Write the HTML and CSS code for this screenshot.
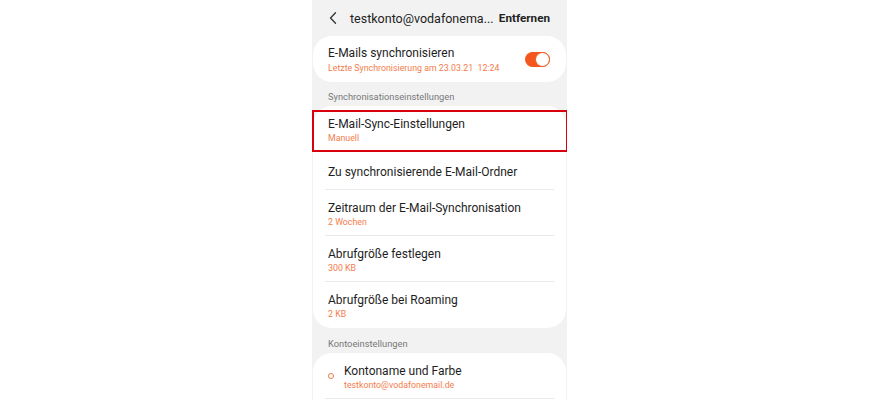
FILE: index.html
```html
<!DOCTYPE html>
<html lang="de">
<head>
<meta charset="utf-8">
<title>Konto</title>
<link rel="stylesheet" href="styles.css">
</head>
<body>
<div class="phone">
  <header class="topbar">
    <svg class="back" width="8" height="12" viewBox="0 0 8 12"><polyline points="6.5,0.8 1.5,6 6.5,11.2" fill="none" stroke="#333" stroke-width="1.3" stroke-linecap="round" stroke-linejoin="round"/></svg>
    <div class="title">testkonto@vodafonema...</div>
    <div class="action">Entfernen</div>
  </header>

  <section class="card card-sync">
    <div class="sync-text">
      <div class="item-title">E-Mails synchronisieren</div>
      <div class="item-sub">Letzte Synchronisierung am 23.03.21&nbsp;&nbsp;12:24</div>
    </div>
    <div class="toggle"><span class="knob"></span></div>
  </section>

  <div class="section-label">Synchronisationseinstellungen</div>

  <section class="card">
    <div class="item highlighted">
      <div class="item-title">E-Mail-Sync-Einstellungen</div>
      <div class="item-sub">Manuell</div>
      <span class="highlight-box"></span>
    </div>
    <div class="item single">
      <div class="item-title">Zu synchronisierende E-Mail-Ordner</div>
    </div>
    <div class="item">
      <div class="item-title">Zeitraum der E-Mail-Synchronisation</div>
      <div class="item-sub">2 Wochen</div>
    </div>
    <div class="item">
      <div class="item-title">Abrufgröße festlegen</div>
      <div class="item-sub">300 KB</div>
    </div>
    <div class="item last">
      <div class="item-title">Abrufgröße bei Roaming</div>
      <div class="item-sub">2 KB</div>
    </div>
  </section>

  <div class="section-label second">Kontoeinstellungen</div>

  <section class="card card-open">
    <div class="item with-icon">
      <span class="dot"></span>
      <div>
        <div class="item-title">Kontoname und Farbe</div>
        <div class="item-sub">testkonto@vodafonemail.de</div>
      </div>
    </div>
  </section>
</div>
</body>
</html>
```

FILE: styles.css
```css
* { box-sizing: border-box; }
html, body { margin: 0; padding: 0; background: #fff; }
body {
  font-family: Roboto, "Liberation Sans", sans-serif;
  color: #1e1e1e;
  height: 400px;
  overflow: hidden;
}
.phone {
  width: 255px;
  height: 400px;
  margin: 0 auto;
  background: #f2f2f2;
  padding: 0 1px;
  overflow: hidden;
}
.topbar {
  height: 36px;
  display: flex;
  align-items: center;
  padding: 0 16px 0 16px;
}
.back { margin-right: 13px; flex: none; }
.title {
  font-size: 12.5px;
  color: #222;
  flex: 1;
  white-space: nowrap;
}
.action {
  font-size: 11.7px;
  font-weight: 700;
  color: #222;
}
.card {
  background: #fff;
  border-radius: 19px;
}
.card-sync {
  height: 46px;
  display: flex;
  align-items: flex-start;
  padding: 9px 16px 0 15px;
}
.card-sync .item-sub { margin-top: 1.5px; }
.sync-text { flex: 1; }
.item-title {
  font-size: 12px;
  line-height: 16px;
  color: #1e1e1e;
}
.item-sub {
  font-size: 8.8px;
  line-height: 10px;
  margin-top: 1px;
  color: #f47c4c;
}
.toggle {
  margin-top: 7px;
  width: 25px;
  height: 15px;
  border-radius: 8px;
  background: #f4571d;
  position: relative;
}
.knob {
  position: absolute;
  right: 0;
  top: 0;
  width: 15px;
  height: 15px;
  border-radius: 50%;
  background: #fff;
  border: 1.5px solid #f4571d;
}
.section-label {
  height: 24px;
  padding: 10px 0 0 15px;
  font-size: 9.3px;
  line-height: 10px;
  color: #787878;
}
.section-label.second { height: 25px; padding-top: 11px; }
.item {
  margin: 0 12px;
  padding: 10px 0 9px 3px;
  height: 46px;
  border-bottom: 1px solid #e9e9e9;
}
.item.single {
  height: 38px;
  padding-top: 12px;
}
.item.last { border-bottom: none; }
.highlighted { position: relative; }
.highlight-box {
  position: absolute;
  left: -13px;
  right: -14px;
  top: 4px;
  bottom: -1px;
  border: 2px solid #d9000d;
}
.card-open {
  border-radius: 19px 19px 0 0;
  height: 60px;
}
.with-icon {
  display: flex;
  align-items: flex-start;
  padding-left: 3px;
}
.dot {
  width: 6px;
  height: 6px;
  border-radius: 50%;
  border: 1.3px solid #f47c4c;
  margin: 10px 10px 0 0;
  flex: none;
}
```
